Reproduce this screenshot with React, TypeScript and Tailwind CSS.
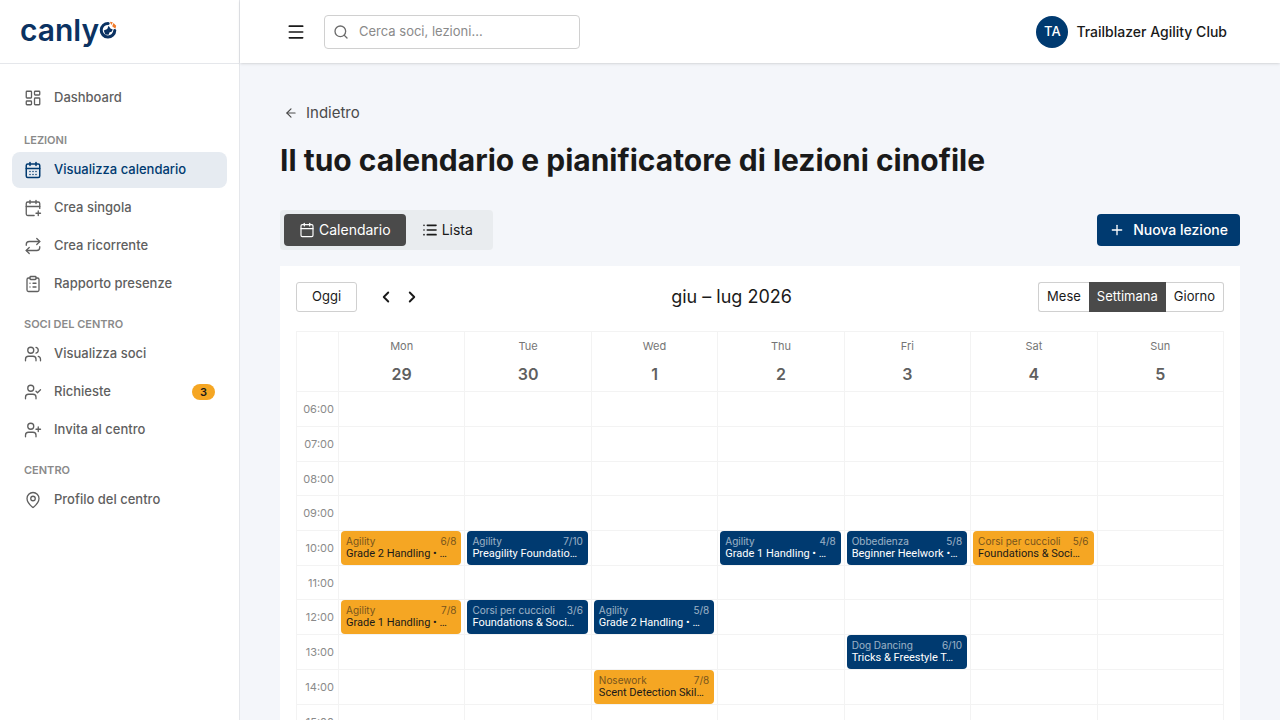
import type { ReactNode } from "react";
import {
  ArrowLeft,
  Calendar,
  CalendarDays,
  CalendarPlus,
  ChevronLeft,
  ChevronRight,
  ClipboardList,
  LayoutDashboard,
  List,
  MapPin,
  Menu,
  Plus,
  Repeat,
  Search,
  UserCheck,
  UserPlus,
  Users,
} from "lucide-react";

type NavEntry = { label: string; icon: ReactNode; active?: boolean; badge?: number };
type Lesson = {
  kind: string;
  seats: string;
  title: string;
  tone: "blue" | "amber";
};

const iconClass = "size-[18px] shrink-0 stroke-[1.75]";

const sections: { title: string; entries: NavEntry[] }[] = [
  {
    title: "Lezioni",
    entries: [
      {
        label: "Visualizza calendario",
        icon: <CalendarDays className="size-[18px] shrink-0 stroke-2" />,
        active: true,
      },
      { label: "Crea singola", icon: <CalendarPlus className={iconClass} /> },
      { label: "Crea ricorrente", icon: <Repeat className={iconClass} /> },
      { label: "Rapporto presenze", icon: <ClipboardList className={iconClass} /> },
    ],
  },
  {
    title: "Soci del centro",
    entries: [
      { label: "Visualizza soci", icon: <Users className={iconClass} /> },
      { label: "Richieste", icon: <UserCheck className={iconClass} />, badge: 3 },
      { label: "Invita al centro", icon: <UserPlus className={iconClass} /> },
    ],
  },
  {
    title: "Centro",
    entries: [{ label: "Profilo del centro", icon: <MapPin className={iconClass} /> }],
  },
];

const days = [
  ["Mon", "29"],
  ["Tue", "30"],
  ["Wed", "1"],
  ["Thu", "2"],
  ["Fri", "3"],
  ["Sat", "4"],
  ["Sun", "5"],
];

const hours = Array.from({ length: 16 }, (_, i) => i + 6);

const lessons: Record<string, Lesson> = {
  "10-0": { kind: "Agility", seats: "6/8", title: "Grade 2 Handling • …", tone: "amber" },
  "10-1": { kind: "Agility", seats: "7/10", title: "Preagility Foundatio…", tone: "blue" },
  "10-3": { kind: "Agility", seats: "4/8", title: "Grade 1 Handling • …", tone: "blue" },
  "10-4": { kind: "Obbedienza", seats: "5/8", title: "Beginner Heelwork •…", tone: "blue" },
  "10-5": { kind: "Corsi per cuccioli", seats: "5/6", title: "Foundations & Soci…", tone: "amber" },
  "12-0": { kind: "Agility", seats: "7/8", title: "Grade 1 Handling • …", tone: "amber" },
  "12-1": { kind: "Corsi per cuccioli", seats: "3/6", title: "Foundations & Soci…", tone: "blue" },
  "12-2": { kind: "Agility", seats: "5/8", title: "Grade 2 Handling • …", tone: "blue" },
  "13-4": { kind: "Dog Dancing", seats: "6/10", title: "Tricks & Freestyle T…", tone: "blue" },
  "14-2": { kind: "Nosework", seats: "7/8", title: "Scent Detection Skil…", tone: "amber" },
};

function Logo() {
  return (
    <a href="#" aria-label="canlyo" className="flex items-center text-[#0b3262]">
      <span className="text-[30px] leading-9 font-semibold">canly</span>
      <svg viewBox="0 0 18 18" className="size-[18px]" fill="none" aria-hidden="true">
        <path d="M9.2 2.4A6.8 6.8 0 1 0 15.8 9.4" stroke="#0b3262" strokeWidth="3" strokeLinecap="round" />
        <path d="M4.8 9.6 8.2 8 9.6 4.8l1.8 2.6 2.4 1.2-1.2 2.2-2 .4-1 2.6-3.4-.4Z" fill="#0b3262" />
        <path d="m10.8.8 3 .4-1.4 2.8Z" fill="#f07a2a" />
        <path d="m14.4 2 2.8 2.8-.8 3-3.2-2.6Z" fill="#f07a2a" />
      </svg>
    </a>
  );
}

function NavItem({ label, icon, active, badge }: NavEntry) {
  return (
    <a
      href="#"
      aria-current={active ? "page" : undefined}
      className={`flex h-9 items-center gap-3 rounded-lg px-3 text-[13px] font-medium ${
        active ? "bg-[#e6ebf1] text-[#003a70]" : "text-[#5f5f5f]"
      }`}
    >
      {icon}
      <span className="flex-1">{label}</span>
      {badge !== undefined && (
        <span className="rounded-full bg-[#f5a623] px-2 text-[11px] leading-4 font-semibold text-[#1a1a1a]">
          {badge}
        </span>
      )}
    </a>
  );
}

function Sidebar() {
  return (
    <aside className="w-60 shrink-0 overflow-hidden border-r border-[#e5e7eb] bg-white">
      <div className="flex h-16 items-center border-b border-[#e5e7eb] px-5 pb-1">
        <Logo />
      </div>
      <nav className="flex flex-col px-3 pt-4">
        <div className="pb-0.5">
          <NavItem label="Dashboard" icon={<LayoutDashboard className={iconClass} />} />
        </div>
        {sections.map((section) => (
          <section key={section.title} className="flex flex-col pt-3.5">
            <h2 className="px-3 pb-1 text-[11px] leading-4 font-semibold text-[#8a8a8a] uppercase">
              {section.title}
            </h2>
            <div className="flex flex-col gap-0.5">
              {section.entries.map((entry) => (
                <NavItem key={entry.label} {...entry} />
              ))}
            </div>
          </section>
        ))}
      </nav>
    </aside>
  );
}

function TopBar() {
  return (
    <header className="z-10 flex h-[63px] shrink-0 items-center bg-white pr-[53px] pl-11 shadow-sm">
      <button type="button" aria-label="Menu" className="flex size-6 items-center justify-center text-[#1a1a1a]">
        <Menu className="size-5" />
      </button>
      <label className="ml-4 flex h-[34px] w-64 items-center gap-2.5 rounded border border-[#d0d0d0] px-2">
        <Search className="size-4 shrink-0 text-[#6b6b6b]" aria-hidden="true" />
        <input
          type="search"
          aria-label="Cerca"
          placeholder="Cerca soci, lezioni..."
          className="w-full bg-transparent text-[13px] text-[#1a1a1a] outline-none placeholder:text-[#8a8a8a]"
        />
      </label>
      <button type="button" className="ml-auto flex items-center gap-2 text-sm font-medium text-[#1a1a1a]">
        <span className="flex size-8 items-center justify-center rounded-full bg-[#003a70] text-[13px] text-white">
          TA
        </span>
        Trailblazer Agility Club
      </button>
    </header>
  );
}

function LessonCard({ kind, seats, title, tone }: Lesson) {
  return (
    <button
      type="button"
      className={`block h-[34px] w-full rounded px-[5px] pb-0.5 text-left ${
        tone === "blue" ? "bg-[#003a70] text-white" : "bg-[#f5a623] text-[#1a1a1a]"
      }`}
    >
      <span className="flex justify-between text-[10px] leading-3 opacity-60">
        <span>{kind}</span>
        <span>{seats}</span>
      </span>
      <span className="block font-['Roboto',sans-serif] text-[11px] leading-[13px] whitespace-nowrap">
        {title}
      </span>
    </button>
  );
}

function WeekTable() {
  return (
    <table className="w-full table-fixed border-collapse border border-[#f3f3f3]">
      <thead>
        <tr className="h-[60px]">
          <th className="w-[42px] border border-[#f3f3f3]" aria-label="Ora" />
          {days.map(([name, date]) => (
            <th key={name} scope="col" className="border border-[#f3f3f3] p-0 align-top">
              <span className="block pt-1.5 text-[11px] leading-4 font-normal text-[#757575]">{name}</span>
              <span className="block pt-2.5 text-base leading-5 font-semibold text-[#5f5f5f]">{date}</span>
            </th>
          ))}
        </tr>
      </thead>
      <tbody>
        {hours.map((hour) => (
          <tr key={hour} className="h-[35px] [&:nth-child(3n)]:h-[34px]">
            <th
              scope="row"
              className="border border-[#f3f3f3] p-0 pr-1 text-right text-[11px] leading-4 font-normal text-[#8a8a8a]"
            >
              {String(hour).padStart(2, "0")}:00
            </th>
            {days.map(([name], day) => {
              const lesson = lessons[`${hour}-${day}`];
              return (
                <td key={name} className="border border-[#f3f3f3] py-0 pr-[3px] pl-0.5 align-top">
                  {lesson && <LessonCard {...lesson} />}
                </td>
              );
            })}
          </tr>
        ))}
      </tbody>
    </table>
  );
}

export default function App() {
  return (
    <div className="flex h-screen overflow-hidden bg-[#f4f6fa] font-['Inter',sans-serif]">
      <Sidebar />
      <div className="flex min-w-0 flex-1 flex-col">
        <TopBar />
        <main className="min-h-0 flex-1 overflow-y-auto px-10 pt-[37px] pb-10 [scrollbar-width:none]">
          <a href="#" className="flex h-[26px] w-fit items-center gap-2 px-1 text-[15px] text-[#4a4a4a]">
            <ArrowLeft className="size-3.5" />
            Indietro
          </a>
          <h1 className="pt-3.5 text-[30px] leading-10 font-bold text-[#1a1a1a]">
            Il tuo calendario e pianificatore di lezioni cinofile
          </h1>
          <div className="flex items-center justify-between pt-[30px]">
            <div className="flex rounded bg-[#e9ecef] p-1 text-sm">
              <button
                type="button"
                aria-pressed="true"
                className="flex h-8 items-center gap-1 rounded bg-[#4a4a4a] px-[15px] text-white"
              >
                <Calendar className="size-4 stroke-[1.75]" />
                Calendario
              </button>
              <button
                type="button"
                aria-pressed="false"
                className="flex h-8 items-center gap-1 rounded px-4 text-[#1a1a1a]"
              >
                <List className="size-4 stroke-[2.5]" />
                Lista
              </button>
            </div>
            <button
              type="button"
              className="flex h-8 items-center gap-2 rounded bg-[#003a70] px-3 text-sm font-medium text-white"
            >
              <Plus className="size-4" />
              Nuova lezione
            </button>
          </div>
          <section className="mt-4 bg-white p-4">
            <div className="flex items-center justify-between pb-[19px]">
              <div className="flex items-center">
                <button
                  type="button"
                  className="mr-4 h-[30px] rounded-[3px] border border-[#d0d0d0] px-[15px] text-[13px] text-[#1a1a1a]"
                >
                  Oggi
                </button>
                <button type="button" aria-label="Precedente" className="flex w-[26px] justify-center text-[#1a1a1a]">
                  <ChevronLeft className="size-[18px] stroke-[2.5]" />
                </button>
                <button type="button" aria-label="Successivo" className="flex w-[26px] justify-center text-[#1a1a1a]">
                  <ChevronRight className="size-[18px] stroke-[2.5]" />
                </button>
              </div>
              <h2 className="text-lg leading-6 text-[#1a1a1a]">giu – lug 2026</h2>
              <div className="flex h-[30px] text-[13px] text-[#1a1a1a]">
                <button type="button" className="rounded-l-[3px] border border-r-0 border-[#d0d0d0] px-2">
                  Mese
                </button>
                <button type="button" aria-pressed="true" className="bg-[#4a4a4a] px-2 text-white">
                  Settimana
                </button>
                <button type="button" className="rounded-r-[3px] border border-l-0 border-[#d0d0d0] px-2">
                  Giorno
                </button>
              </div>
            </div>
            <WeekTable />
          </section>
        </main>
      </div>
    </div>
  );
}
